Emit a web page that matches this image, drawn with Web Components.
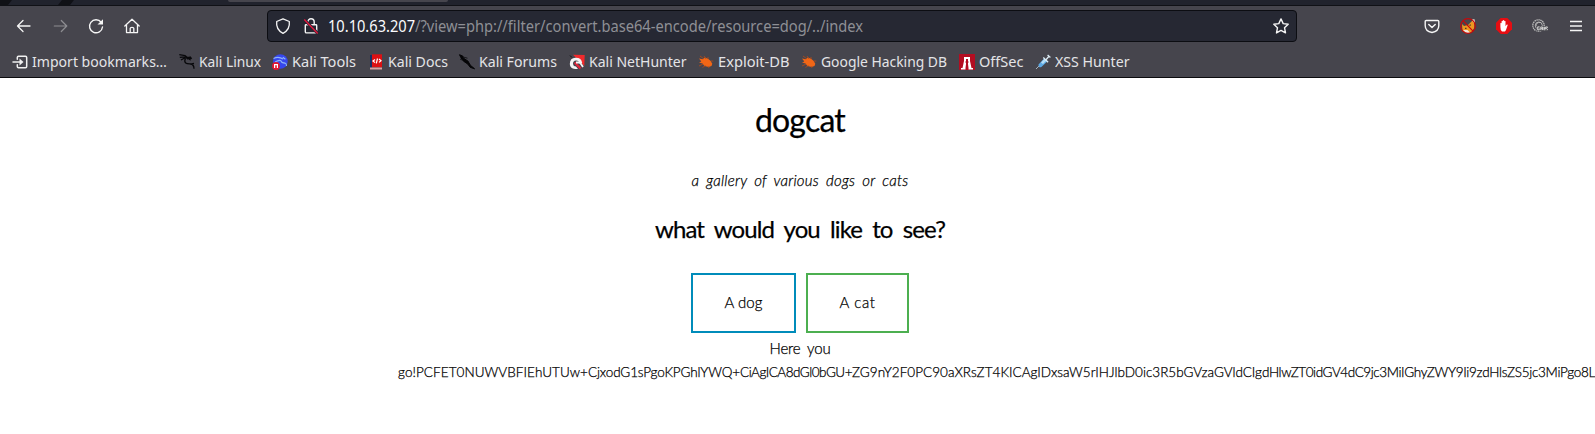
<!DOCTYPE html>
<html lang="en">
<head>
<meta charset="utf-8">
<title>dogcat</title>
<style>
html,body{margin:0;height:434px;overflow:hidden;background:#fff}
</style>
</head>
<body>
<browser-window></browser-window>
<script>
const define=(name,css,html,after)=>customElements.define(name,class extends HTMLElement{
  connectedCallback(){
    if(this.shadowRoot)return;
    const r=this.attachShadow({mode:'open'});
    const t=document.createElement('template');
    t.innerHTML='<style>'+css+'</style>'+(typeof html==='function'?html(this):html);
    r.append(t.content.cloneNode(true));
    if(after)after(this,r);
  }
});

const icons={
back:'<path d="M8.500 2.500 3 8l5.500 5.500M3 8h12.500" transform="translate(-1.500)" fill="none" stroke="#f5f5f5" stroke-width="1.300" stroke-linecap="round" stroke-linejoin="round"/>',
forward:'<path d="M8.500 2.500 14 8l-5.500 5.500M14 8H1.500" transform="translate(.8)" fill="none" stroke="#8d8d91" stroke-width="1.200" stroke-linecap="round" stroke-linejoin="round"/>',
reload:'<path d="M13.200 4.300A6.500 6.500 0 1 0 14.500 9" fill="none" stroke="#f5f5f5" stroke-width="1.400" stroke-linecap="round"/><path d="M15 1.200v5.300H9.500z" fill="#f5f5f5"/>',
home:'<path d="M.8 8 8 1.200 15.200 8M2.500 7v7.600h11V7M6.200 14.500V10.300Q6.200 9.300 8 9.300T9.800 10.300v4.200" fill="none" stroke="#f5f5f5" stroke-width="1.300" stroke-linecap="round" stroke-linejoin="round"/>',
shield:'<path d="M8 .8 14.300 3.500Q15.300 11.500 8 15.300 .7 11.500 1.700 3.500Z" fill="none" stroke="#f5f5f5" stroke-width="1.300" stroke-linejoin="round"/>',
lock:'<path d="M4.800 6.500V4a3.200 3.200 0 0 1 6.400 0v2.500M3 6.800h10a.7.7 0 0 1 .7.7v6.200a1.200 1.200 0 0 1-1.200 1.200h-9a1.200 1.200 0 0 1-1.200-1.200V7.500a.7.7 0 0 1 .7-.7z" fill="none" stroke="#f5f5f5" stroke-width="1.400"/><path d="M1.500 1.800 14.800 15.400" stroke="#262833" stroke-width="3"/><path d="M1.300 1.600 14.700 15.400" stroke="#e2173d" stroke-width="1.400"/>',
star:'<path d="m8 .9 2.200 4.700 5 .6-3.700 3.500 1 5.200L8 12.400l-4.500 2.500 1-5.200L.8 6.200l5-.6z" fill="none" stroke="#f5f5f5" stroke-width="1.400" stroke-linejoin="round"/>',
pocket:'<path d="M2.200 2.500h11.600q1 0 1 1v4q0 5.800-6.800 7-6.800-1.200-6.800-7v-4q0-1 1-1z" fill="none" stroke="#f5f5f5" stroke-width="1.400"/><path d="m4.800 6.500 3.200 3 3.200-3" fill="none" stroke="#f5f5f5" stroke-width="1.500" stroke-linecap="round" stroke-linejoin="round"/>',
fox:'<path d="m2 6 2 2 4-1 5-5 1.500 2-.3 6-3 4.500L6 15.300 2.500 13z" fill="#ee9820"/><path d="m12 1.500 2.500-.3.500 4-2-1zM3 12l3 3h4.500l-3-3z" fill="#f1e6da"/><path d="M5 10.300h1.500M9.500 7.500l1.300-.7" stroke="#4b392a" stroke-width="1.300"/><circle cx="8" cy="8" r="7.300" fill="none" stroke="#c5090b" stroke-width="1.200"/><path d="m3 2.700 10 10.500" stroke="#c5090b" stroke-width="1.200"/>',
hand:'<path d="M4.700 0h6.600L16 4.700v6.600L11.300 16H4.700L0 11.300V4.700z" fill="#e60d12"/><path d="M4.400 9V5.200q.6-.8 1.200 0V3.200q.6-.8 1.200 0v-.7q.7-.8 1.400 0v.7q.6-.7 1.300 0v5l1.300-1.600q.9-.3.900.5L10 12l-1 1.500H6L4.800 12z" fill="#fff"/>',
globe:'<g fill="none" stroke="#b8b8b8"><circle cx="6.500" cy="7.500" r="5.700" stroke-width="1.300" stroke-dasharray="1.500 .5"/><circle cx="6.800" cy="7.500" r="3.500"/><path d="M4 8q0-4 4.500-3.500"/></g><path d="M4.500 8H16v5H4.500z" fill="#55555a"/><path d="M7.500 8.900H5.700v3h1.500v-1.500M8.800 12V9h1.800v3M8.800 10.700h1.800M12 12V9M12.200 9.300h1.500l-1.400 1.300h1.500L12.300 12M14 9h1.500l-1 1.500 1.200 1.400" fill="none" stroke="#dedede" stroke-width=".9"/>',
menu:'<path d="M2 3.500h12M2 8h12M2 12.500h12" stroke="#f5f5f5" stroke-width="1.300"/>',
import:'<path d="M5.300 5.300V3.400q0-1.200 1.200-1.200h7q1.200 0 1.200 1.200v9.200q0 1.200-1.200 1.200h-7q-1.200 0-1.200-1.200v-1.900M1 8h8" fill="none" stroke="#f0f0f0" stroke-width="1.500" stroke-linecap="round"/><path d="m7.500 4.500 4 3.500-4 3.500z" fill="#f0f0f0"/>',
kali:'<path d="M.3.700 6 1.500l2 1.700 3.400.3M.8 3.300 6 2.800l3.300 2.400M2 6l4-2.200M7.500 3l3.500 2.500.3-2.300 1.400 1.500M6.500 4.300C4 10 8.500 9.800 11.500 10c2.300.2 3.500 1.500 3.500 4.800M11.500 10.200l3.500-.8" fill="none" stroke="#08080b" stroke-width="1.300"/>',
tools:'<circle cx="8.400" cy="7.500" r="7.300" fill="#3647ee"/><path d="M1.500 4.500q5-2.500 9.500.5M3 8q4.500-2.500 6-1.200.5 2.200 4 2.300 1.600.5 1.500 2.800M10.800 3.200l2.600 2" fill="none" stroke="#8fb5f8" stroke-width="1.100"/><circle cx="4" cy="12" r="3.900" fill="#e41831"/><path d="M2.600 14v-3.400h2.800V14" fill="none" stroke="#fff" stroke-width="1.200"/>',
docs:'<path d="M2 1h2v14H2z" fill="#172f63"/><path d="M4 .3h10v13H4z" fill="#dc1013"/><path d="M2 13.500h12v2H2z" fill="#d9a1a1"/><path d="M7 5.500 5 7l2 1.600M11 5l2 1.700-2 1.700M9.500 4.500 8.300 9.400" fill="none" stroke="#fff" stroke-width="1.200"/>',
forums:'<path d="m.5.700 3.200 1.300 1.200 2.500 4 2.500 2.500 4.300 4.200 3.500-4.300-1.400L8.700 10 4.500 7.200 2 3.800z" fill="#050507" stroke="#050507"/><path d="m1 5 2.500 1.200M4 3l4.500 1.200" stroke="#17171b"/>',
nethunter:'<path d="m4 .8 11.700.2-.4 11z" fill="#f12a2c"/><path d="M.8 10Q1 3.500 7 3.800q5.500 0 6.200 5.200l-2.800.5Q10 6.300 7 6.500 3.900 6.700 4 10q.3 2.500 3 2.500L9 15H6Q1 14.500.8 10z" fill="#f4f4f4"/><path d="m5.800 8.500 5.700 6" stroke="#e12238" stroke-width="2.300"/><path d="M7 8.500h4l3 4.500" fill="none" stroke="#f4f4f4" stroke-width="1.800"/><path d="m1 1.500 2 2" stroke="#111"/>',
exploit:'<path d="m1 4.500 3.500.8L7 3.500l3 1.200 2.500 2.100 1.800 3-.8 2.200-3 1-4-1-2-2.400-3.500-1 2.300-1z" fill="#f16616"/><path d="m2 2 4 3M6 2l2 3M10 3v2M1 12l4-2M4.500 13.500l3-2M13 7l2.300.1M10 12l1 2" stroke="#b64a17" stroke-width=".8"/>',
offsec:'<path d="M0 0h16v16H0z" fill="#b30d21"/><path d="M5 3h6v4l1.500 7H14v1.500H9.500V14l-.5-4V5H7v5l-.5 4v1.500H2V14h1.500L5 7z" fill="#fff"/><path d="M6.300 8h3.400" stroke="#b30d21"/>',
xss:'<path d="m1 15 4-4" stroke="#a7b2bb"/><path d="m3.500 10.500 5.700-6 3 3-5.800 5.600q-3 1-2.900-2.600z" fill="#5da9e4"/><path d="m6 8.500 3.500-4 2 2L8 10z" fill="#b4ddf5"/><path d="m8.300 3.500 4.800 4.700M10.800 6l3.400-4M12.600 1l2.800 2.600" stroke="#dcebf4" stroke-width="1.300"/>'
};

define('glyph-icon',':host{display:block;flex:none;width:16px;height:16px}svg{display:block;overflow:visible}',
 e=>'<svg width="16" height="16" viewBox="0 0 16 16">'+icons[e.getAttribute('name')]+'</svg>');

/* Text run that fills the given width, by tracking or, with "condense", by narrower glyphs. */
define('fit-text',':host{display:block;flex:none;white-space:pre}span{display:inline-block;transform-origin:0 50%}','<span><slot></slot></span>',(e,r)=>{
  const w=+e.getAttribute('w'),s=r.querySelector('span');
  e.style.width=w+'px';
  const have=s.getBoundingClientRect().width;
  if(e.hasAttribute('condense'))s.style.transform='scaleX('+w/have+')';
  else s.style.letterSpacing=((w-have)/e.textContent.length)+'px';
});

define('tab-strip',':host{display:flex;height:5px;background:#21232d;border-bottom:1px solid #101116;overflow:hidden}i{width:12px;height:5px;background:#101116;transform:skewX(-38deg)}i:nth-of-type(1){margin-left:-2px}i:nth-of-type(2){margin-left:50px}b{margin-left:156px;width:220px;height:2px;background:#46454d;border-radius:0 0 4px 4px}','<i></i><i></i><b></b>');

define('url-bar',':host{box-sizing:border-box;display:flex;align-items:center;width:1030px;height:32px;border:1px solid #0c0d12;border-radius:4px;background:#262833;padding:0 7px;font:15.500px/30px "Noto Sans",sans-serif;color:#8e8f95}.lock{margin-left:12px;margin-right:9px}.host{color:#fbfbfe}.star{margin-left:auto}',
 '<glyph-icon name="shield"></glyph-icon><glyph-icon class="lock" name="lock"></glyph-icon><fit-text condense class="host" w="87">10.10.63.207</fit-text><fit-text condense w="448">/?view=php://filter/convert.base64-encode/resource=dog/../index</fit-text><glyph-icon class="star" name="star"></glyph-icon>');

define('nav-bar',':host{display:flex;align-items:center;height:40px;box-sizing:border-box;padding:0 11px 0 16px;background:#46454d}.nav{display:flex;gap:20px;width:251px}.ext{display:flex;gap:20px;margin-left:auto}',
 '<div class="nav">'+['back','forward','reload','home'].map(n=>`<glyph-icon name="${n}"></glyph-icon>`).join('')+'</div><url-bar></url-bar><div class="ext">'+['pocket','fox','hand','globe','menu'].map(n=>`<glyph-icon name="${n}"></glyph-icon>`).join('')+'</div>');

define('bookmark-item',':host{display:flex;align-items:center;flex:none;font:14.700px/20px "Noto Sans",sans-serif;color:#e4e4e7}fit-text{margin:0 0 2px 4px}',
 e=>`<glyph-icon name="${e.getAttribute('icon')}"></glyph-icon><fit-text condense w="${e.getAttribute('w')}">${e.getAttribute('label')}</fit-text>`);

const marks=[['import','Import bookmarks…',135],['kali','Kali Linux',62],['tools','Kali Tools',64],['docs','Kali Docs',60],['forums','Kali Forums',78],['nethunter','Kali NetHunter',97.5],['exploit','Exploit-DB',71.500],['exploit','Google Hacking DB',126],['offsec','OffSec',44.500],['xss','XSS Hunter',74.500]];
define('bookmarks-bar',':host{display:flex;align-items:center;gap:11.600px;height:31px;padding-left:12px;background:#46454d;border-bottom:1px solid #0c0c0f}',
 marks.map(m=>`<bookmark-item icon="${m[0]}" label="${m[1]}" w="${m[2]}"></bookmark-item>`).join(''));

define('choice-button',':host{box-sizing:border-box;display:flex;justify-content:center;height:60px;border:2px solid var(--edge);line-height:54px}','<slot></slot>');

const runs=[['go!',18],['PCFET0NUWVBFIEhUTUw+',172],['CjxodG1sPgoKPGhlYWQ+',152],['CiAgICA8dGl0bGU+',112],['ZG9nY2F0PC90aXRsZT4K',157],['ICAgIDxsaW5rIHJlbD0i',137],['c3R5bGVzaGVldCIg',116],['dHlwZT0idGV4dC9jc3Mi',139],['IGhyZWY9Ii9zdHlsZS5jc3MiPgo8L',194]];
define('gallery-page',`:host{display:flex;flex-direction:column;align-items:center;width:1595px;height:356px;padding-left:5px;box-sizing:border-box;background:#fff;color:#000;overflow:hidden;font:300 15px/24px Lato,"Open Sans",sans-serif;-webkit-text-stroke:.25px #000}
.title{font-size:32px;line-height:48px;font-weight:400;margin-top:18px}
.sub{font-style:italic;margin-top:24px;line-height:24px;word-spacing:3px}
.ask{font-size:24px;line-height:36px;font-weight:400;margin-top:19px;word-spacing:5px}
.choices{display:flex;gap:10px;margin-top:26px}
.here{margin-top:3px;word-spacing:3px}
.dog{--edge:#008cba;width:105px}.cat{--edge:#4caf50;width:103px}
.dump{display:flex;align-self:flex-start;margin-left:393px;font-size:13.500px}`,
`<fit-text class="title" w="90">dogcat</fit-text>
<fit-text class="sub" w="217">a gallery of various dogs or cats</fit-text>
<fit-text class="ask" w="290">what would you like to see?</fit-text>
<div class="choices"><choice-button class="dog"><fit-text w="38">A dog</fit-text></choice-button><choice-button class="cat"><fit-text w="36">A cat</fit-text></choice-button></div>
<fit-text class="here" w="61">Here you</fit-text>
<div class="dump">${runs.map(r=>`<fit-text w="${r[1]}">${r[0]}</fit-text>`).join('')}</div>`);

define('browser-window',':host{display:flex;flex-direction:column;width:1595px;height:434px;overflow:hidden}','<tab-strip></tab-strip><nav-bar></nav-bar><bookmarks-bar></bookmarks-bar><gallery-page></gallery-page>');
</script>
</body>
</html>
